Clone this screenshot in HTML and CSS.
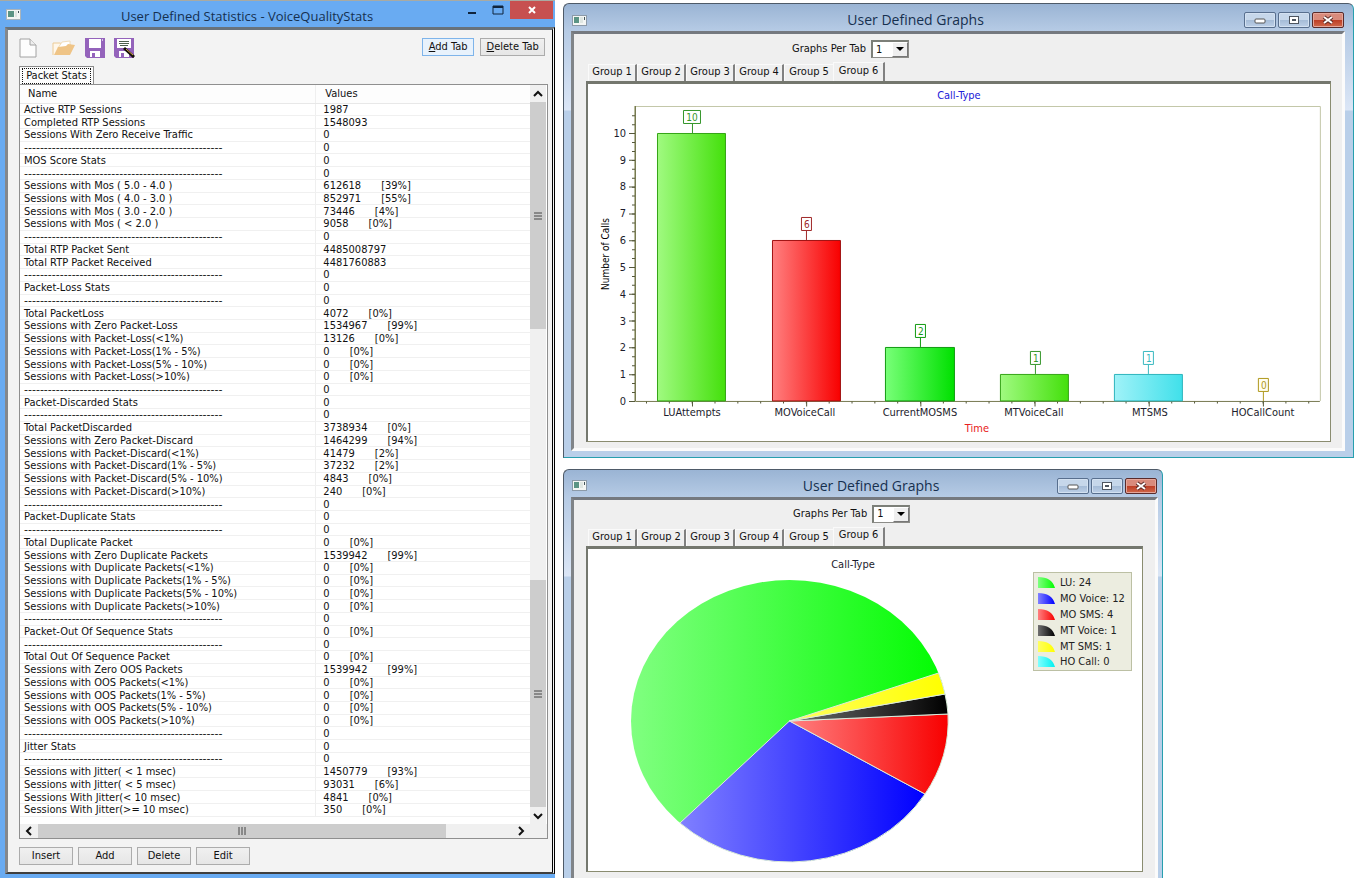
FILE: index.html
```html
<!DOCTYPE html>
<html lang="en">
<head>
	<meta charset="utf-8">
	<title>User Defined Statistics</title>
	<link rel="stylesheet" href="styles.css">
</head>
<body>
	<div class="desktop">

		<!-- statistics window -->
		<section class="stats-window">
			<header class="stats-title">
				<svg class="app-icon" width="15" height="11" viewBox="0 0 15 11"><rect x="0.5" y="0.5" width="14" height="10" fill="#f4f6f4" stroke="#a9b4bc"/><rect x="2" y="2" width="6" height="6" fill="#5b9484"/><rect x="9" y="2" width="2" height="6" fill="#dfe6e2"/><rect x="12" y="2" width="1" height="2" fill="#44555a"/></svg>
				<h1>User Defined Statistics - VoiceQualityStats</h1>
				<div class="flat-controls">
					<button aria-label="Minimize"><svg width="10" height="12" viewBox="0 0 10 12"><rect x="1" y="8" width="8" height="2" fill="#10243c"/></svg></button>
					<button aria-label="Maximize"><svg width="12" height="12" viewBox="0 0 12 12"><path d="M1 2h10v8h-10z" fill="none" stroke="#10243c"/><rect x="1" y="2" width="10" height="2" fill="#10243c"/></svg></button>
					<button class="flat-close" aria-label="Close"><svg width="10" height="10" viewBox="0 0 10 10"><path d="M2 2l6 6M8 2l-6 6" stroke="#fff" stroke-width="2"/></svg></button>
				</div>
			</header>
			<div class="stats-client">
				<div class="toolbar">
					<button class="tool" aria-label="New"><svg width="18" height="20" viewBox="0 0 18 20"><path d="M1 1h10l6 6v12H1z" fill="#fdfdfd" stroke="#a2a2a2"/><path d="M11 1v6h6" fill="#eee" stroke="#a2a2a2"/></svg></button>
					<button class="tool" aria-label="Open"><svg width="24" height="20" viewBox="0 0 24 20"><path d="M1 17V5h7l2 1h8v4" fill="#fff7ea" stroke="#eccb96"/><path d="M10 4l8-1v7H6z" fill="#fff" stroke="#f0dcba"/><path d="M2 17l4-8 8-1 2-2 7 1-5 10z" fill="#efc486"/></svg></button>
					<button class="tool" aria-label="Save"><svg width="20" height="20" viewBox="0 0 20 20"><path d="M0 0h20v20H2l-2-2z" fill="#9463bb"/><rect x="4" y="1" width="12" height="9" fill="#fff"/><rect x="5" y="13" width="10" height="6" fill="#fff"/><rect x="7" y="15" width="3" height="4" fill="#9463bb"/><rect x="17" y="1" width="1" height="2" fill="#d9c5e8"/></svg></button>
					<button class="tool" aria-label="Save As"><svg width="22" height="20" viewBox="0 0 22 20"><path d="M0 0h20v20H2l-2-2z" fill="#9463bb"/><rect x="3" y="1" width="14" height="9" fill="#fff"/><path d="M5 3.500h10M5 5.500h10M6 7.500h8" fill="none" stroke="#4d5f4d"/><rect x="5" y="13" width="10" height="6" fill="#fff"/><rect x="7" y="15" width="3" height="4" fill="#9463bb"/><path d="M10 10l10 9" stroke="#151008" stroke-width="3"/><path d="M12 11l7 6" stroke="#d9a648"/></svg></button>
					<div class="toolbar-right">
						<button class="btn btn-focus"><u>A</u>dd Tab</button>
						<button class="btn btn-wide"><u>D</u>elete Tab</button>
					</div>
				</div>
				<button class="stats-tab"><span>Packet Stats</span></button>
				<div class="list">
					<div class="list-main">
						<table>
							<thead>
								<tr><th>Name</th><th>Values</th></tr>
							</thead>
							<tbody>
								<tr><td>Active RTP Sessions</td><td>1987</td></tr>
								<tr><td>Completed RTP Sessions</td><td>1548093</td></tr>
								<tr><td>Sessions With Zero Receive Traffic</td><td>0</td></tr>
								<tr class="sep"><td>--------------------------------------------------</td><td>0</td></tr>
								<tr><td>MOS Score Stats</td><td>0</td></tr>
								<tr class="sep"><td>--------------------------------------------------</td><td>0</td></tr>
								<tr><td>Sessions with Mos ( 5.0 - 4.0 )</td><td>612618<i>[39%]</i></td></tr>
								<tr><td>Sessions with Mos ( 4.0 - 3.0 )</td><td>852971<i>[55%]</i></td></tr>
								<tr><td>Sessions with Mos ( 3.0 - 2.0 )</td><td>73446<i>[4%]</i></td></tr>
								<tr><td>Sessions with Mos ( &lt; 2.0 )</td><td>9058<i>[0%]</i></td></tr>
								<tr class="sep"><td>--------------------------------------------------</td><td>0</td></tr>
								<tr><td>Total RTP Packet Sent</td><td>4485008797</td></tr>
								<tr><td>Total RTP Packet Received</td><td>4481760883</td></tr>
								<tr class="sep"><td>--------------------------------------------------</td><td>0</td></tr>
								<tr><td>Packet-Loss Stats</td><td>0</td></tr>
								<tr class="sep"><td>--------------------------------------------------</td><td>0</td></tr>
								<tr><td>Total PacketLoss</td><td>4072<i>[0%]</i></td></tr>
								<tr><td>Sessions with Zero Packet-Loss</td><td>1534967<i>[99%]</i></td></tr>
								<tr><td>Sessions with Packet-Loss(&lt;1%)</td><td>13126<i>[0%]</i></td></tr>
								<tr><td>Sessions with Packet-Loss(1% - 5%)</td><td>0<i>[0%]</i></td></tr>
								<tr><td>Sessions with Packet-Loss(5% - 10%)</td><td>0<i>[0%]</i></td></tr>
								<tr><td>Sessions with Packet-Loss(&gt;10%)</td><td>0<i>[0%]</i></td></tr>
								<tr class="sep"><td>--------------------------------------------------</td><td>0</td></tr>
								<tr><td>Packet-Discarded Stats</td><td>0</td></tr>
								<tr class="sep"><td>--------------------------------------------------</td><td>0</td></tr>
								<tr><td>Total PacketDiscarded</td><td>3738934<i>[0%]</i></td></tr>
								<tr><td>Sessions with Zero Packet-Discard</td><td>1464299<i>[94%]</i></td></tr>
								<tr><td>Sessions with Packet-Discard(&lt;1%)</td><td>41479<i>[2%]</i></td></tr>
								<tr><td>Sessions with Packet-Discard(1% - 5%)</td><td>37232<i>[2%]</i></td></tr>
								<tr><td>Sessions with Packet-Discard(5% - 10%)</td><td>4843<i>[0%]</i></td></tr>
								<tr><td>Sessions with Packet-Discard(&gt;10%)</td><td>240<i>[0%]</i></td></tr>
								<tr class="sep"><td>--------------------------------------------------</td><td>0</td></tr>
								<tr><td>Packet-Duplicate Stats</td><td>0</td></tr>
								<tr class="sep"><td>--------------------------------------------------</td><td>0</td></tr>
								<tr><td>Total Duplicate Packet</td><td>0<i>[0%]</i></td></tr>
								<tr><td>Sessions with Zero Duplicate Packets</td><td>1539942<i>[99%]</i></td></tr>
								<tr><td>Sessions with Duplicate Packets(&lt;1%)</td><td>0<i>[0%]</i></td></tr>
								<tr><td>Sessions with Duplicate Packets(1% - 5%)</td><td>0<i>[0%]</i></td></tr>
								<tr><td>Sessions with Duplicate Packets(5% - 10%)</td><td>0<i>[0%]</i></td></tr>
								<tr><td>Sessions with Duplicate Packets(&gt;10%)</td><td>0<i>[0%]</i></td></tr>
								<tr class="sep"><td>--------------------------------------------------</td><td>0</td></tr>
								<tr><td>Packet-Out Of Sequence Stats</td><td>0<i>[0%]</i></td></tr>
								<tr class="sep"><td>--------------------------------------------------</td><td>0</td></tr>
								<tr><td>Total Out Of Sequence Packet</td><td>0<i>[0%]</i></td></tr>
								<tr><td>Sessions with Zero OOS Packets</td><td>1539942<i>[99%]</i></td></tr>
								<tr><td>Sessions with OOS Packets(&lt;1%)</td><td>0<i>[0%]</i></td></tr>
								<tr><td>Sessions with OOS Packets(1% - 5%)</td><td>0<i>[0%]</i></td></tr>
								<tr><td>Sessions with OOS Packets(5% - 10%)</td><td>0<i>[0%]</i></td></tr>
								<tr><td>Sessions with OOS Packets(&gt;10%)</td><td>0<i>[0%]</i></td></tr>
								<tr class="sep"><td>--------------------------------------------------</td><td>0</td></tr>
								<tr><td>Jitter Stats</td><td>0</td></tr>
								<tr class="sep"><td>--------------------------------------------------</td><td>0</td></tr>
								<tr><td>Sessions with Jitter( &lt; 1 msec)</td><td>1450779<i>[93%]</i></td></tr>
								<tr><td>Sessions with Jitter( &lt; 5 msec)</td><td>93031<i>[6%]</i></td></tr>
								<tr><td>Sessions With Jitter(&lt; 10 msec)</td><td>4841<i>[0%]</i></td></tr>
								<tr><td>Sessions With Jitter(&gt;= 10 msec)</td><td>350<i>[0%]</i></td></tr>
							</tbody>
						</table>
						<div class="vscroll">
							<button aria-label="Scroll up"><svg width="10" height="8" viewBox="0 0 10 8"><path d="M1 6l4-4 4 4" fill="none" stroke="#111" stroke-width="2"/></svg></button>
							<div class="vthumb"><svg width="8" height="8" viewBox="0 0 8 8"><path d="M0 1h8M0 4h8M0 7h8" stroke="#444"/></svg></div>
							<div class="vtrack"></div>
							<div class="vthumb"><svg width="8" height="8" viewBox="0 0 8 8"><path d="M0 1h8M0 4h8M0 7h8" stroke="#444"/></svg></div>
							<button aria-label="Scroll down"><svg width="10" height="8" viewBox="0 0 10 8"><path d="M1 2l4 4 4-4" fill="none" stroke="#111" stroke-width="2"/></svg></button>
						</div>
					</div>
					<div class="hscroll">
						<button aria-label="Scroll left"><svg width="8" height="10" viewBox="0 0 8 10"><path d="M6 1l-4 4 4 4" fill="none" stroke="#111" stroke-width="2"/></svg></button>
						<div class="hthumb"><svg width="8" height="8" viewBox="0 0 8 8"><path d="M1 0v8M4 0v8M7 0v8" stroke="#444"/></svg></div>
						<div class="htrack"></div>
						<button aria-label="Scroll right"><svg width="8" height="10" viewBox="0 0 8 10"><path d="M2 1l4 4-4 4" fill="none" stroke="#111" stroke-width="2"/></svg></button>
					</div>
				</div>
				<div class="actions">
					<button class="btn">Insert</button>
					<button class="btn">Add</button>
					<button class="btn">Delete</button>
					<button class="btn">Edit</button>
				</div>
			</div>
		</section>

		<div class="graphs">

			<!-- bar graph window -->
			<section class="glass-window">
				<header class="glass-title">
					<svg class="app-icon" width="15" height="11" viewBox="0 0 15 11"><rect x="0.5" y="0.5" width="14" height="10" fill="#f4f6f4" stroke="#8c9aa8"/><rect x="2" y="2" width="5" height="6" fill="#5b9484"/><rect x="8" y="2" width="3" height="6" fill="#dfe6e2"/><rect x="12" y="2" width="1" height="3" fill="#44555a"/></svg>
					<h2>User Defined Graphs</h2>
					<div class="glass-controls">
						<button aria-label="Minimize"><svg width="12" height="10" viewBox="0 0 12 10"><rect x="1" y="4" width="10" height="4" rx="1" fill="#fff" stroke="#555"/></svg></button>
						<button aria-label="Maximize"><svg width="12" height="10" viewBox="0 0 12 10"><rect x="1.5" y="1.5" width="9" height="7" fill="#fff" stroke="#4d5560"/><rect x="4.500" y="4.500" width="3" height="1" fill="#8ea6c2" stroke="#4d5560"/></svg></button>
						<button class="glass-close" aria-label="Close"><svg width="12" height="10" viewBox="0 0 12 10"><path d="M2 2l8 6M10 2l-8 6" stroke="#5a2a26" stroke-width="4"/><path d="M2 2l8 6M10 2l-8 6" stroke="#fff" stroke-width="2"/></svg></button>
					</div>
				</header>
				<div class="glass-client">
					<div class="per-tab">
						<label for="perTab1">Graphs Per Tab</label>
						<span class="combo">
							<select id="perTab1"><option>1</option><option>2</option><option>4</option></select>
							<span class="combo-arrow"><svg width="8" height="5" viewBox="0 0 8 5"><path d="M0 0h8l-4 4z" fill="#000"/></svg></span>
						</span>
					</div>
					<nav class="tabs">
						<button>Group 1</button>
						<button>Group 2</button>
						<button>Group 3</button>
						<button>Group 4</button>
						<button>Group 5</button>
						<button class="active">Group 6</button>
					</nav>
					<div class="panel">
						<svg class="chart" viewBox="0 0 742 357">
							<defs>
								<linearGradient id="gLime"><stop offset="0" stop-color="#a0fa80"/><stop offset="1" stop-color="#44e00c"/></linearGradient>
								<linearGradient id="gRed"><stop offset="0" stop-color="#ff8080"/><stop offset="1" stop-color="#f80000"/></linearGradient>
								<linearGradient id="gGreen"><stop offset="0" stop-color="#78ff78"/><stop offset="1" stop-color="#00e000"/></linearGradient>
								<linearGradient id="gCyan"><stop offset="0" stop-color="#a0f2f8"/><stop offset="1" stop-color="#40e0ea"/></linearGradient>
							</defs>
							<text x="371" y="15" class="mid chart-title">Call-Type</text>

							<path d="M47 22.500H732.500V317" fill="none" stroke="#c3c7a8"/>
							<path d="M47.500 22V317.500H732" fill="none" stroke="#75784f"/>
							<path d="M46.500 22V317" stroke="#b9bb9b"/>

							<!-- y axis ticks -->
							<path d="M44 318V49" stroke="#55583a" stroke-width="6" stroke-dasharray="1 25.800"/>
							<path d="M45.500 318V30" stroke="#55583a" stroke-width="3" stroke-dasharray="1 7.930"/>
							<g class="end">
								<text x="38" y="321">0</text>
								<text x="38" y="294">1</text>
								<text x="38" y="267">2</text>
								<text x="38" y="241">3</text>
								<text x="38" y="214">4</text>
								<text x="38" y="187">5</text>
								<text x="38" y="160">6</text>
								<text x="38" y="133">7</text>
								<text x="38" y="106">8</text>
								<text x="38" y="80">9</text>
								<text x="38" y="53">10</text>
							</g>
							<text class="mid axis-name" transform="translate(21 170) rotate(-90)">Number of Calls</text>

							<!-- x axis ticks -->
							<path d="M58 318.500H730" stroke="#55583a" stroke-width="2" stroke-dasharray="1 21.840"/>
							<path d="M104 320H680" stroke="#55583a" stroke-width="5" stroke-dasharray="1 113.200"/>

							<g stroke-width="1">
								<path d="M69.500 317V49.500H137.500V317z" fill="url(#gLime)" stroke="#34a416"/>
								<path d="M184.500 317V156.500H252.500V317z" fill="url(#gRed)" stroke="#a01010"/>
								<path d="M297.500 317V263.500H366.500V317z" fill="url(#gGreen)" stroke="#109a10"/>
								<path d="M412.500 317V290.500H480.500V317z" fill="url(#gLime)" stroke="#34a416"/>
								<path d="M526.500 317V290.500H594.500V317z" fill="url(#gCyan)" stroke="#2cb4bc"/>
							</g>

							<g fill="#fff">
								<path d="M104.500 49V40M95.500 26.500h17v13h-17z" stroke="#34962a"/>
								<path d="M218.500 156V147M213.500 133.500h10v13h-10z" stroke="#a02828"/>
								<path d="M332.500 263V254M327.500 240.500h10v13h-10z" stroke="#129a12"/>
								<path d="M447.500 290V281M442.500 267.500h10v13h-10z" stroke="#34962a"/>
								<path d="M560.500 290V281M555.500 267.500h10v13h-10z" stroke="#38b8c0"/>
								<path d="M675.500 317V308M670.500 294.500h10v13h-10z" stroke="#b0981c" fill="#fffef0"/>
							</g>
							<g class="mid value">
								<text x="104" y="37" fill="#34962a">10</text>
								<text x="219" y="144" fill="#a02828">6</text>
								<text x="333" y="251" fill="#129a12">2</text>
								<text x="448" y="278" fill="#34962a">1</text>
								<text x="561" y="278" fill="#38b8c0">1</text>
								<text x="676" y="305" fill="#b0981c">0</text>
							</g>

							<g class="mid">
								<text x="104" y="332">LUAttempts</text>
								<text x="217" y="332">MOVoiceCall</text>
								<text x="332" y="332">CurrentMOSMS</text>
								<text x="446" y="332">MTVoiceCall</text>
								<text x="562" y="332">MTSMS</text>
								<text x="675" y="332">HOCallCount</text>
							</g>
							<text x="389" y="348" class="mid time">Time</text>
						</svg>
					</div>
				</div>
			</section>

			<!-- pie graph window -->
			<section class="glass-window glass-small">
				<header class="glass-title">
					<svg class="app-icon" width="15" height="11" viewBox="0 0 15 11"><rect x="0.5" y="0.5" width="14" height="10" fill="#f4f6f4" stroke="#8c9aa8"/><rect x="2" y="2" width="5" height="6" fill="#5b9484"/><rect x="8" y="2" width="3" height="6" fill="#dfe6e2"/><rect x="12" y="2" width="1" height="3" fill="#44555a"/></svg>
					<h2>User Defined Graphs</h2>
					<div class="glass-controls">
						<button aria-label="Minimize"><svg width="12" height="10" viewBox="0 0 12 10"><rect x="1" y="4" width="10" height="4" rx="1" fill="#fff" stroke="#555"/></svg></button>
						<button aria-label="Maximize"><svg width="12" height="10" viewBox="0 0 12 10"><rect x="1.5" y="1.5" width="9" height="7" fill="#fff" stroke="#4d5560"/><rect x="4.500" y="4.500" width="3" height="1" fill="#8ea6c2" stroke="#4d5560"/></svg></button>
						<button class="glass-close" aria-label="Close"><svg width="12" height="10" viewBox="0 0 12 10"><path d="M2 2l8 6M10 2l-8 6" stroke="#5a2a26" stroke-width="4"/><path d="M2 2l8 6M10 2l-8 6" stroke="#fff" stroke-width="2"/></svg></button>
					</div>
				</header>
				<div class="glass-client">
					<div class="per-tab">
						<label for="perTab2">Graphs Per Tab</label>
						<span class="combo">
							<select id="perTab2"><option>1</option><option>2</option><option>4</option></select>
							<span class="combo-arrow"><svg width="8" height="5" viewBox="0 0 8 5"><path d="M0 0h8l-4 4z" fill="#000"/></svg></span>
						</span>
					</div>
					<nav class="tabs">
						<button>Group 1</button>
						<button>Group 2</button>
						<button>Group 3</button>
						<button>Group 4</button>
						<button>Group 5</button>
						<button class="active">Group 6</button>
					</nav>
					<div class="panel">
						<svg class="chart" viewBox="0 0 554 322">
							<defs>
								<linearGradient id="pGreen"><stop offset="0" stop-color="#80ff80"/><stop offset="1" stop-color="#00fc00"/></linearGradient>
								<linearGradient id="pBlue"><stop offset="0" stop-color="#8080ff"/><stop offset="1" stop-color="#0000ff"/></linearGradient>
								<linearGradient id="pRed"><stop offset="0" stop-color="#ff8080"/><stop offset="1" stop-color="#f80000"/></linearGradient>
								<linearGradient id="pBlack"><stop offset="0" stop-color="#707070"/><stop offset="1" stop-color="#000"/></linearGradient>
								<linearGradient id="pYellow"><stop offset="0" stop-color="#ffff60"/><stop offset="1" stop-color="#ffff00"/></linearGradient>
								<linearGradient id="pCyan"><stop offset="0" stop-color="#80ffff"/><stop offset="1" stop-color="#00f0f0"/></linearGradient>
							</defs>
							<text x="265" y="19" class="mid pie-title">Call-Type</text>
							<ellipse cx="201.500" cy="172" rx="158.500" ry="141" fill="url(#pGreen)"/>
							<g stroke="#ddeadd" stroke-width="1" stroke-linejoin="round">
								<path d="M201.500 172L92 274A158.500 141 0 0 0 337 245z" fill="url(#pBlue)"/>
								<path d="M201.500 172L337 245A158.500 141 0 0 0 360 165z" fill="url(#pRed)"/>
								<path d="M201.500 172L360 165A158.500 141 0 0 0 357 145z" fill="url(#pBlack)"/>
								<path d="M201.500 172L357 145A158.500 141 0 0 0 350.500 124z" fill="url(#pYellow)"/>
							</g>

							<!-- legend -->
							<rect x="445.500" y="23.500" width="98" height="98" fill="#ecede0" stroke="#bcc0a4"/>
							<path d="M450 39v-11q14 0 17 11z" fill="url(#pGreen)"/>
							<path d="M450 55v-11q14 0 17 11z" fill="url(#pBlue)"/>
							<path d="M450 71v-11q14 0 17 11z" fill="url(#pRed)"/>
							<path d="M450 87v-11q14 0 17 11z" fill="url(#pBlack)"/>
							<path d="M450 103v-11q14 0 17 11z" fill="url(#pYellow)"/>
							<path d="M450 118v-11q14 0 17 11z" fill="url(#pCyan)"/>
							<g class="legend">
								<text x="472" y="37">LU: 24</text>
								<text x="472" y="53">MO Voice: 12</text>
								<text x="472" y="69">MO SMS: 4</text>
								<text x="472" y="85">MT Voice: 1</text>
								<text x="472" y="101">MT SMS: 1</text>
								<text x="472" y="116">HO Call: 0</text>
							</g>
						</svg>
					</div>
				</div>
			</section>
		</div>
	</div>
</body>
</html>
```
FILE: styles.css
```css
* {
	margin: 0;
	padding: 0;
	box-sizing: border-box;
}

body {
	font-family: "DejaVu Sans Condensed", "DejaVu Sans", sans-serif;
	font-size: 11px;
	line-height: 12px;
	color: #111;
	background: #fff;
	overflow: hidden;
}

button, select {
	font: inherit;
	color: inherit;
	border: 0;
	background: none;
}

svg {
	display: block;
}

.desktop {
	display: flex;
	gap: 8px;
	height: 100vh;
}

h1, h2 {
	flex: 1;
	font-family: "Open Sans", sans-serif;
	font-size: 14px;
	line-height: 20px;
	font-weight: normal;
	text-align: center;
	white-space: nowrap;
	color: #16304f;
}

h1 {
	font-size: 13px;
}

/* statistics window */
.stats-window {
	display: flex;
	flex-direction: column;
	width: 41%;
	max-width: 600px;
	background: #69abf2;
	border-top: 1px solid #a9aaa2;
	padding-bottom: 4px;
}

.stats-title {
	display: flex;
	align-items: flex-start;
	height: 26px;
	padding: 0 2px 0 6px;
}

.stats-title .app-icon {
	margin-top: 8px;
}

.stats-title h1 {
	padding-top: 5px;
	padding-left: 14px;
}

.flat-controls {
	display: flex;
}

.flat-controls button {
	width: 26px;
	height: 18px;
	display: flex;
	align-items: center;
	justify-content: center;
}

.flat-controls .flat-close {
	width: 43px;
	margin-left: -1px;
	background: #c75050;
}

.stats-client {
	flex: 1;
	display: flex;
	flex-direction: column;
	min-height: 0;
	margin-left: 5px;
	padding: 8px 4px 7px 11px;
	background: #f3f3f3;
	border-top: 3px solid #68727b;
	border-left: 3px solid #85888c;
	border-bottom: 2px solid #3f3f3f;
	border-right: 3px double #000;
}

.toolbar {
	display: flex;
	height: 28px;
	gap: 9px;
}

.tool {
	height: 20px;
}

.tool:nth-child(1) {
	margin-right: 6px;
}

.toolbar-right {
	display: flex;
	gap: 6px;
	margin-left: auto;
	padding-right: 3px;
}

.btn {
	width: 54px;
	height: 18px;
	border: 1px solid #acacac;
	background: linear-gradient(#f0f0f0, #e6e6e6);
}

.btn-focus {
	width: 52px;
	border-color: #7eb4ea;
	background: #e8f2fc;
}

.btn-wide {
	width: 65px;
}

.stats-tab {
	align-self: flex-start;
	width: 75px;
	height: 18px;
	padding: 1px 2px;
	border: 1px solid #8a8a8a;
	border-bottom: 0;
	background: #fcfcfc;
}

.stats-tab span {
	display: block;
	height: 16px;
	line-height: 14px;
	border: 1px dotted #111;
}

.list {
	flex: 1;
	display: flex;
	flex-direction: column;
	min-height: 0;
	border: 1px solid #8f8f8f;
	background: #fff;
}

.list-main {
	flex: 1;
	display: flex;
	min-height: 0;
}

table {
	flex: 1;
	align-self: stretch;
	margin-bottom: 7px;
	border-collapse: collapse;
	table-layout: fixed;
	background: #fff;
}

th {
	width: 58%;
	height: 18px;
	padding-left: 8px;
	font-weight: normal;
	text-align: left;
	background: #fdfdfd;
	border-bottom: 1px solid #e8e8e8;
}

th + th {
	width: 42%;
	padding-left: 9px;
}

td {
	padding-left: 4px;
	line-height: 11px;
	white-space: pre;
	border-bottom: 1px solid #f0f0f0;
}

th + th, td + td {
	border-left: 1px solid #efefef;
}

td + td {
	padding-left: 7px;
}

td i {
	margin-left: 20px;
	font-style: normal;
}

.sep td:first-child {
	font-family: "DejaVu Sans", sans-serif;
}

/* scrollbars */
.vscroll {
	display: flex;
	flex-direction: column;
	width: 16px;
	margin-right: 1px;
	background: #f0f0f0;
}

.vscroll button, .hscroll button {
	display: flex;
	align-items: center;
	justify-content: center;
	width: 16px;
	height: 17px;
}

.vthumb, .hthumb {
	flex: 227;
	display: flex;
	align-items: center;
	justify-content: center;
	background: #cdcdcd;
}

.vtrack {
	flex: 251;
	background: #f0f0f0;
}

.hscroll {
	display: flex;
	height: 14px;
	padding-right: 17px;
	background: #f0f0f0;
}

.hscroll button {
	width: 18px;
	height: 14px;
}

.hthumb {
	flex: 407;
}

.htrack {
	flex: 66;
}

.actions {
	display: flex;
	gap: 5px;
	padding-top: 8px;
}

/* graph windows */
.graphs {
	flex: 1;
	display: flex;
	flex-direction: column;
	gap: 11px;
	padding-top: 3px;
	min-width: 0;
	height: 100vh;
	overflow: hidden;
}

.glass-window {
	flex: none;
	padding: 0 8px 6px 7px;
	background: linear-gradient(#9ab4d4, #b6cbe5 27px, #dbe6f6 106px, #b9cfe9 107px);
	border: 1px solid #4e5a68;
	border-right-color: #279fae;
	border-bottom-color: #279fae;
	border-radius: 6px 6px 0 0;
}

.glass-small {
	width: 600px;
	max-width: 100%;
	padding-right: 4px;
}

.glass-title {
	display: flex;
	align-items: center;
	height: 27px;
	padding-right: 1px;
	padding-top: 5px;
}

.glass-title .app-icon {
	margin-left: 1px;
}

.glass-small h2 {
	padding-left: 98px;
}

.glass-controls {
	display: flex;
	gap: 2px;
}

.glass-controls button {
	display: flex;
	align-items: center;
	justify-content: center;
	width: 32px;
	height: 16px;
	border: 1px solid #586f8e;
	border-radius: 2px;
	box-shadow: inset 0 0 0 1px #d3e1f1;
	background: linear-gradient(#c6d7ea 50%, #a4bbd6 50%, #bdd0e8);
}

.glass-controls .glass-close {
	border-color: #592b2b;
	box-shadow: inset 0 0 0 1px #e5a79b;
	background: linear-gradient(#d98b7c 50%, #bd3c24 50%, #d06a4c);
}

.glass-client {
	padding: 6px 11px 6px 12px;
	background: #efefef;
	border-top: 3px solid #75797f;
	border-left: 3px solid #808488;
	border-right: 3px solid #fbfbfb;
	border-bottom: 3px solid #fbfbfb;
}

.glass-small .glass-client {
	padding-top: 5px;
	padding-right: 12px;
}

.per-tab {
	display: flex;
	align-items: center;
	justify-content: center;
	gap: 5px;
	height: 18px;
	padding-right: 216px;
}

.glass-small .per-tab {
	padding-right: 26px;
}

.combo {
	position: relative;
}

.combo select {
	display: block;
	appearance: none;
	width: 38px;
	height: 18px;
	padding-left: 3px;
	background: #fff;
	border: 2px solid #7c7f78;
	border-right: 1px solid #8c8c88;
	border-bottom: 1px solid #8c8c88;
}

.combo-arrow {
	position: absolute;
	top: 2px;
	right: 1px;
	bottom: 1px;
	width: 16px;
	display: flex;
	align-items: center;
	justify-content: center;
	background: #efefef;
	border: 1px solid #fff;
	border-right-color: #777;
	border-bottom-color: #777;
	pointer-events: none;
}

.tabs {
	display: flex;
	align-items: flex-end;
	height: 23px;
	padding-left: 2px;
}

.tabs button {
	width: 49px;
	height: 17px;
	padding-bottom: 2px;
	border-left: 1px solid #fafafa;
	border-top: 1px solid #fafafa;
	border-right: 2px solid #808080;
}

.tabs button:nth-child(5) {
	border-right: 0;
}

.tabs .active {
	width: 52px;
	height: 19px;
	padding-bottom: 3px;
}

.panel {
	background: #fff;
	border: 1px solid #8a8c70;
	border-top: 3px solid #74776e;
	border-left: 2px solid #74776e;
}

/* charts */
.chart {
	width: 100%;
	height: auto;
	font-size: 11px;
	fill: #1c1c2c;
}

.mid {
	text-anchor: middle;
}

.end {
	text-anchor: end;
}

.chart-title {
	fill: #2020d8;
}

.time {
	fill: #e82020;
}

.axis-name {
	font-size: 10px;
	fill: #000;
}

.value {
	font-size: 10px;
}

.legend {
	fill: #222;
}
```
